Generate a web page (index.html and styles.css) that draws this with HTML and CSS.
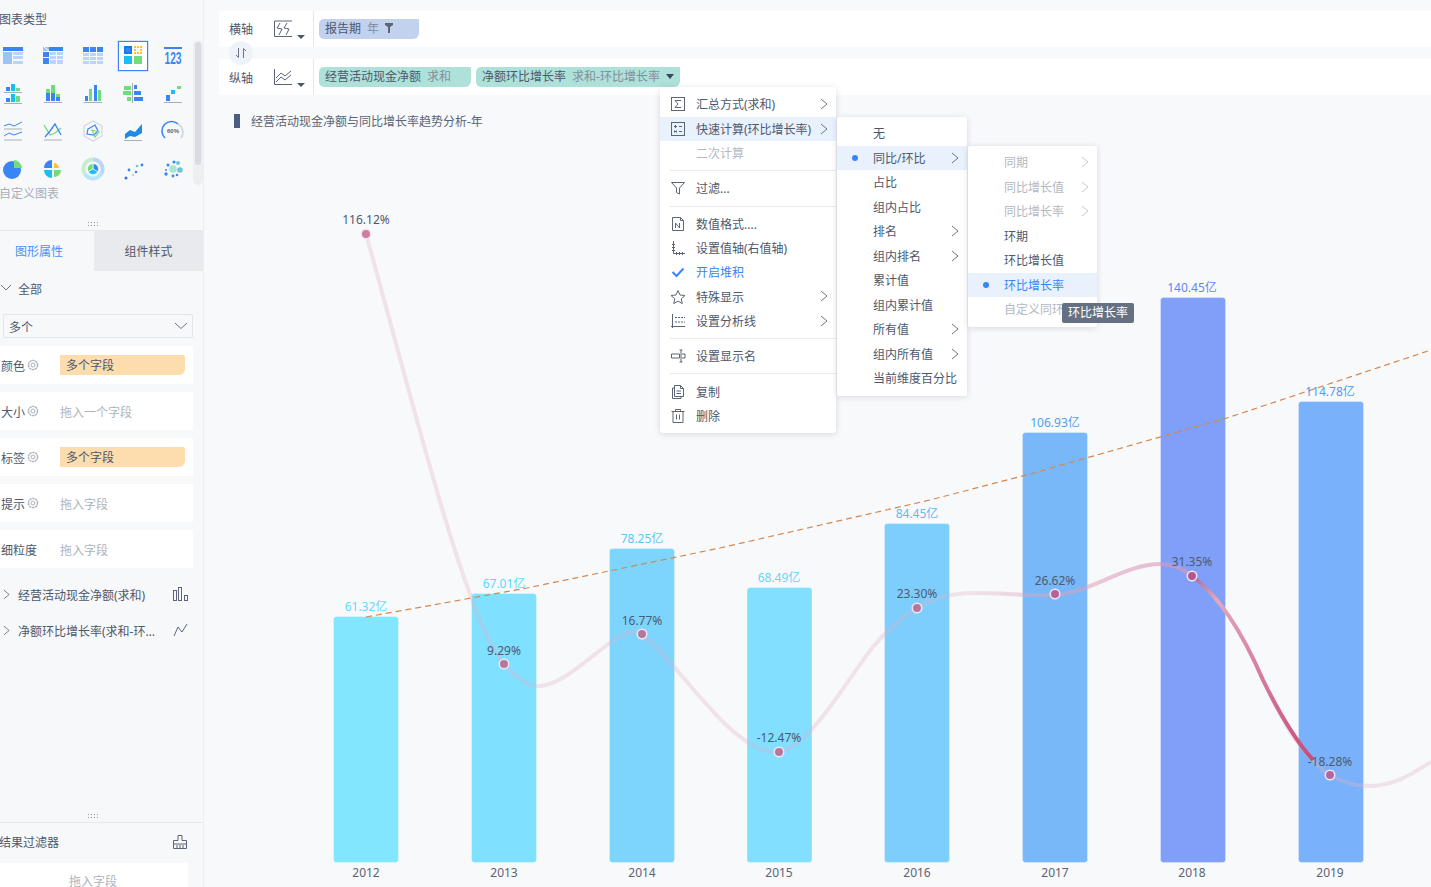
FILE: index.html
```html
<!DOCTYPE html>
<html lang="zh">
<head>
<meta charset="utf-8">
<title>图表</title>
<link rel="stylesheet" href="styles.css">
</head>
<body>
<svg class="defs" aria-hidden="true">
  <symbol id="chev" viewBox="0 0 8 12"><polyline points="1,1 7,6 1,11" fill="none" stroke="currentColor" stroke-width="1"/></symbol>
  <symbol id="gear" viewBox="0 0 12 12"><circle cx="6" cy="6" r="4.6" fill="none" stroke="currentColor" stroke-width="1.4" stroke-dasharray="2.4 .5"/><circle cx="6" cy="6" r="2" fill="none" stroke="currentColor" stroke-width="1"/></symbol>
</svg>
<div class="app">
  <aside class="side">
    <div class="side-title">图表类型</div>
    <div class="types">
      <div class="type-grid">
        <div class="type"><svg width="24" height="24"><rect x="2" y="3" width="20" height="4" fill="#3a85f5"/><rect x="2" y="8" width="9" height="6" fill="#9cc2f6"/><rect x="2" y="14" width="9" height="6" fill="#9cc2f6"/><rect x="12" y="8" width="10" height="3" fill="#bcd4f8"/><rect x="12" y="12" width="10" height="3" fill="#bcd4f8"/><rect x="12" y="17" width="10" height="3" fill="#bcd4f8"/></svg></div>
        <div class="type"><svg width="24" height="24"><rect x="2" y="3" width="6" height="4" fill="#9cc2f6"/><line x1="3" y1="3" x2="8" y2="7" stroke="#fff"/><rect x="8" y="3" width="14" height="4" fill="#3a85f5"/><rect x="2" y="8" width="6" height="5" fill="#3a85f5"/><rect x="2" y="14" width="6" height="6" fill="#3a85f5"/><rect x="9" y="8" width="6" height="3" fill="#bcd4f8"/><rect x="16" y="8" width="6" height="3" fill="#bcd4f8"/><rect x="9" y="12" width="6" height="3" fill="#bcd4f8"/><rect x="16" y="12" width="6" height="3" fill="#bcd4f8"/><rect x="9" y="16" width="6" height="4" fill="#bcd4f8"/><rect x="16" y="16" width="6" height="4" fill="#bcd4f8"/></svg></div>
        <div class="type"><svg width="24" height="24"><rect x="2" y="3" width="6" height="5" fill="#3a85f5"/><rect x="9" y="3" width="6" height="5" fill="#3a85f5"/><rect x="16" y="3" width="6" height="5" fill="#3a85f5"/><rect x="2" y="9" width="6" height="3" fill="#bcd4f8"/><rect x="9" y="9" width="6" height="3" fill="#bcd4f8"/><rect x="16" y="9" width="6" height="3" fill="#bcd4f8"/><rect x="2" y="13" width="6" height="3" fill="#bcd4f8"/><rect x="9" y="13" width="6" height="3" fill="#bcd4f8"/><rect x="16" y="13" width="6" height="3" fill="#bcd4f8"/><rect x="2" y="17" width="6" height="3" fill="#bcd4f8"/><rect x="9" y="17" width="6" height="3" fill="#bcd4f8"/><rect x="16" y="17" width="6" height="3" fill="#bcd4f8"/></svg></div>
        <div class="type"><div class="type-on"><svg width="30" height="30"><rect x="5" y="4" width="8" height="8" fill="#0e7fe8"/><rect x="7" y="6" width="4" height="4" fill="#3a85f5"/><g fill="#fbc02d"><rect x="15" y="4" width="2" height="2"/><rect x="18" y="4" width="2" height="2"/><rect x="21" y="4" width="2" height="2"/><rect x="15" y="7" width="2" height="2"/><rect x="21" y="7" width="2" height="2"/><rect x="15" y="10" width="2" height="2"/><rect x="18" y="10" width="2" height="2"/><rect x="21" y="10" width="2" height="2"/></g><rect x="5" y="14" width="8" height="8" fill="#19bff2"/><rect x="15" y="14" width="8" height="8" fill="#6fdc7d"/></svg></div></div>
        <div class="type"><svg width="24" height="24"><rect x="3" y="3" width="18" height="2" fill="#3a85f5"/><text x="12" y="20" class="t123" textLength="17" lengthAdjust="spacingAndGlyphs">123</text></svg></div>

        <div class="type"><svg width="24" height="24"><rect x="5" y="6" width="4" height="4" fill="#3a85f5"/><rect x="10" y="3" width="4" height="7" fill="#19bff2"/><rect x="15" y="7" width="4" height="3" fill="#6fdc7d"/><rect x="3" y="11" width="18" height="1" fill="#a9aeb9"/><rect x="5" y="17" width="4" height="4" fill="#3a85f5"/><rect x="10" y="13" width="4" height="8" fill="#19bff2"/><rect x="15" y="15" width="4" height="6" fill="#6fdc7d"/><rect x="3" y="22" width="18" height="1" fill="#a9aeb9"/></svg></div>
        <div class="type"><svg width="24" height="24"><rect x="5" y="8" width="4" height="4" fill="#6fdc7d"/><rect x="5" y="12" width="4" height="8" fill="#3a85f5"/><rect x="10" y="4" width="4" height="8" fill="#6fdc7d"/><rect x="10" y="12" width="4" height="8" fill="#3a85f5"/><rect x="15" y="13" width="4" height="3" fill="#6fdc7d"/><rect x="15" y="16" width="4" height="4" fill="#3a85f5"/><rect x="3" y="21" width="18" height="1" fill="#a9aeb9"/></svg></div>
        <div class="type"><svg width="24" height="24"><rect x="4" y="15" width="3" height="5" fill="#3a85f5"/><rect x="8" y="8" width="3" height="12" fill="#6fdc7d"/><rect x="13" y="4" width="3" height="16" fill="#3a85f5"/><rect x="17" y="9" width="3" height="11" fill="#6fdc7d"/><rect x="3" y="21" width="18" height="1" fill="#a9aeb9"/></svg></div>
        <div class="type"><svg width="24" height="24"><rect x="11" y="2" width="1" height="20" fill="#a9aeb9"/><rect x="3" y="5" width="7" height="4" fill="#6fdc7d"/><rect x="2" y="10" width="8" height="4" fill="#6fdc7d"/><rect x="6" y="16" width="4" height="4" fill="#6fdc7d"/><rect x="13" y="4" width="3" height="4" fill="#3a85f5"/><rect x="13" y="10" width="7" height="4" fill="#3a85f5"/><rect x="13" y="16" width="9" height="4" fill="#3a85f5"/></svg></div>
        <div class="type"><svg width="24" height="24"><rect x="5" y="14" width="4" height="6" fill="#3a85f5"/><rect x="10" y="9" width="4" height="4" fill="#19bff2"/><rect x="16" y="5" width="4" height="3" fill="#6fdc7d"/><rect x="3" y="21" width="18" height="1" fill="#a9aeb9"/></svg></div>

        <div class="type"><svg width="24" height="24" fill="none"><polyline points="3,7 8,5 13,7 21,3" stroke="#3a85f5"/><line x1="3" y1="10" x2="21" y2="10" stroke="#a9aeb9"/><polyline points="3,17 8,14 13,16 21,13" stroke="#3a85f5"/><line x1="3" y1="21" x2="21" y2="21" stroke="#a9aeb9"/></svg></div>
        <div class="type"><svg width="24" height="24" fill="none"><polyline points="3,6 9,16 14,14 20,9" stroke="#6fdc7d" stroke-width="1.3"/><polyline points="4,18 9,12 14,5 20,16" stroke="#3a85f5" stroke-width="1.3"/><line x1="3" y1="21" x2="21" y2="21" stroke="#a9aeb9"/></svg></div>
        <div class="type"><svg width="24" height="24" fill="none"><polygon points="12,2 21,7 21,17 12,22 3,17 3,7" stroke="#d4d6dc" stroke-width="1.2"/><polygon points="7,10 14,6 17,12 13,16 6,15" stroke="#3a85f5" stroke-width="1.2"/><polygon points="11,11 18,13 14,18" stroke="#6fdc7d" stroke-width="1.2"/></svg></div>
        <div class="type"><svg width="24" height="24"><path d="M4 15 L9 11 L14 13 L21 5 V14 L14 18 L9 17 L4 20 Z" fill="#1f8be8"/><rect x="3" y="21" width="18" height="1" fill="#a9aeb9"/></svg></div>
        <div class="type"><svg width="24" height="24" fill="none"><path d="M4 19 A9.5 9.5 0 0 1 17 5" stroke="#3a85f5" stroke-width="1.6"/><path d="M17 5 A9.5 9.5 0 0 1 20 19" stroke="#d4d6dc" stroke-width="1.6"/><text x="12" y="14" class="t60">60%</text></svg></div>

        <div class="type"><svg width="24" height="24"><circle cx="11" cy="13" r="9" fill="#3a85f5"/><path d="M13 3 A9 9 0 0 1 21 11 H13 Z" fill="#6fdc7d"/></svg></div>
        <div class="type"><svg width="24" height="24"><path d="M11 3 V11 H3 A8 8 0 0 1 11 3Z" fill="#3a85f5"/><path d="M3 13 H11 V21 A8 8 0 0 1 3 13Z" fill="#19bff2"/><path d="M13 6 A6 6 0 0 1 18 11 H13Z" fill="#fbc02d"/><path d="M13 13 H20 A7 7 0 0 1 13 20Z" fill="#6fdc7d"/></svg></div>
        <div class="type"><svg width="24" height="24" fill="none"><path d="M12 2.500 A9.500 9.500 0 0 1 20.200 16.800" stroke="#bcd4f8" stroke-width="4"/><path d="M20.200 16.800 A9.500 9.500 0 0 1 3.800 16.800" stroke="#b6e6f8" stroke-width="4"/><path d="M3.800 16.800 A9.500 9.500 0 0 1 12 2.500" stroke="#c8ecd0" stroke-width="4"/><path d="M12 12 V6.500 A5.500 5.500 0 0 1 16.800 14.800Z" fill="#3a85f5" stroke="#fff" stroke-width=".6"/><path d="M12 12 L7.200 14.800 A5.500 5.500 0 0 1 12 6.500Z" fill="#6fdc7d" stroke="#fff" stroke-width=".6"/><path d="M12 12 L16.800 14.800 A5.500 5.500 0 0 1 7.200 14.800Z" fill="#19bff2" stroke="#fff" stroke-width=".6"/></svg></div>
        <div class="type"><svg width="24" height="24"><circle cx="5" cy="21" r="1.5" fill="#3a6fd0"/><circle cx="8" cy="13" r="1.4" fill="#3a85f5"/><circle cx="12" cy="18" r="1.3" fill="#a8e6d0"/><circle cx="15" cy="15" r="1.3" fill="#3a85f5"/><circle cx="16" cy="9" r="1.3" fill="#6cc6d8"/><circle cx="21" cy="8" r="1.4" fill="#3a85f5"/></svg></div>
        <div class="type"><svg width="24" height="24"><circle cx="7" cy="8" r="1.5" fill="#3a85f5"/><circle cx="13" cy="5" r="1.6" fill="#3a85f5"/><circle cx="17" cy="6" r="2" fill="#6cc6d8"/><circle cx="5" cy="13" r="1" fill="#3a85f5"/><circle cx="12" cy="12" r="3.8" fill="#a8e6d0"/><circle cx="19" cy="13" r="2.8" fill="#6cc6d8"/><circle cx="5" cy="17" r="1.7" fill="#3a85f5"/><circle cx="12" cy="19" r="1.4" fill="#3a85f5"/><circle cx="16" cy="18" r="1.3" fill="#3a85f5"/></svg></div>
      </div>
      <div class="track"><div class="thumb"></div></div>
    </div>
    <div class="custom">自定义图表</div>
    <div class="grip-row"><div class="grip"></div></div>
    <div class="tabs"><div class="tab tab-on">图形属性</div><div class="tab tab-off">组件样式</div></div>
    <div class="all-row"><svg class="chev-down" width="12" height="8" viewBox="0 0 12 8"><polyline points="1,1 6,6 11,1" fill="none" stroke="#6b7485"/></svg><span class="nudge">全部</span></div>
    <div class="select"><span class="nudge">多个</span><svg width="14" height="8" viewBox="0 0 14 8"><polyline points="1,1 7,6.500 13,1" fill="none" stroke="#6b7485"/></svg></div>
    <div class="field"><div class="field-label"><span class="nudge">颜色</span><svg class="gear"><use href="#gear"/></svg></div><div class="tag-orange">多个字段</div></div>
    <div class="field"><div class="field-label"><span class="nudge">大小</span><svg class="gear"><use href="#gear"/></svg></div><div class="hint nudge">拖入一个字段</div></div>
    <div class="field"><div class="field-label"><span class="nudge">标签</span><svg class="gear"><use href="#gear"/></svg></div><div class="tag-orange">多个字段</div></div>
    <div class="field"><div class="field-label"><span class="nudge">提示</span><svg class="gear"><use href="#gear"/></svg></div><div class="hint nudge">拖入字段</div></div>
    <div class="field"><div class="field-label"><span class="nudge">细粒度</span></div><div class="hint nudge">拖入字段</div></div>
    <div class="tree first">
      <svg class="tree-chev"><use href="#chev"/></svg><span class="tree-text nudge">经营活动现金净额(求和)</span>
      <svg class="tree-ic" width="15" height="14" viewBox="0 0 15 14" fill="none" stroke="#5b6577"><rect x=".5" y="3.500" width="3" height="10"/><rect x="5.500" y=".5" width="3" height="13"/><rect x="11.500" y="8.500" width="3" height="5"/></svg>
    </div>
    <div class="tree">
      <svg class="tree-chev"><use href="#chev"/></svg><span class="tree-text nudge">净额环比增长率(求和-环…</span>
      <svg class="tree-ic" width="15" height="14" viewBox="0 0 15 14" fill="none" stroke="#5b6577"><polyline points="1,13 5,4 9,9 14,1"/></svg>
    </div>
    <div class="bottom">
      <div class="grip-row small"><div class="grip"></div></div>
      <div class="filter-head"><span>结果过滤器</span><svg width="16" height="16" viewBox="0 0 16 16" fill="none" stroke="#5b6577"><path d="M6 1.500 H10 V6.500 H14.500 V14.500 H1.500 V6.500 H6 Z"/><path d="M1.500 10 H14.500 M5 11 V14 M8 11 V14 M11 11 V14"/></svg></div>
      <div class="filter-box">拖入字段</div>
    </div>
  </aside>

  <main class="main">
    <div class="axis">
      <div class="axis-head">
        <span class="axis-label">横轴</span>
        <svg class="axis-ic" width="20" height="18" viewBox="0 0 20 18" fill="none" stroke="#5b6577"><path d="M1.500 1 V16.500 H19 M1.500 1 H19"/><path d="M7 3 L4 8 L9 9 L6 15 M14 3 L11 8 L16 9 L13 15"/></svg>
        <span class="caret"></span>
      </div>
      <div class="pills">
        <div class="pill pill-blue"><span>报告期</span><span class="sub">年</span><svg class="funnel" width="8" height="10" viewBox="0 0 8 10"><path d="M0 0 H8 V2 L5 4 V10 H3 V4 L0 2Z" fill="#5b6577"/></svg></div>
      </div>
    </div>
    <div class="swap"><svg width="12" height="12" viewBox="0 0 12 12" fill="none" stroke="#6b7485"><path d="M3.500 1 V10.500 M1 8 L3.500 10.500 M8.500 11 V1.500 M8.500 1.500 L11 4"/></svg></div>
    <div class="axis">
      <div class="axis-head">
        <span class="axis-label axis-low">纵轴</span>
        <svg class="axis-ic" width="20" height="18" viewBox="0 0 20 18" fill="none" stroke="#5b6577"><path d="M1.500 1 V16.500 H19"/><path d="M3 10 L8 5 L12 8 L18 3 M3 14 L8 9 L12 12 L18 7"/></svg>
        <span class="caret"></span>
      </div>
      <div class="pills">
        <div class="pill pill-green pad-a"><span>经营活动现金净额</span><span class="sub">求和</span></div>
        <div class="pill pill-green"><span>净额环比增长率</span><span class="sub">求和-环比增长率</span><span class="pill-caret"></span></div>
      </div>
    </div>
    <div class="chart-title"><span class="mark"></span><span>经营活动现金净额与同比增长率趋势分析-年</span></div>

    <svg class="chart" width="1227" height="757" viewBox="204 130 1227 757">
      <defs>
        <linearGradient id="hot" gradientUnits="userSpaceOnUse" x1="1192" y1="576" x2="1313" y2="760">
          <stop offset="0" stop-color="#a06aa8"/><stop offset=".15" stop-color="#e2a8bc"/><stop offset=".5" stop-color="#d880a0"/><stop offset="1" stop-color="#c84c78"/>
        </linearGradient>
        <linearGradient id="mid" gradientUnits="userSpaceOnUse" x1="960" y1="0" x2="1140" y2="0">
          <stop offset="0" stop-color="#d88fb4" stop-opacity="0"/><stop offset="1" stop-color="#d88fb4" stop-opacity=".42"/>
        </linearGradient>
      </defs>
      <g stroke="#fff" stroke-opacity=".3">
        <rect x="333.500" y="616.500" width="65" height="246" rx="3" fill="#82e6ff"/>
        <rect x="471.500" y="593.500" width="65" height="269" rx="3" fill="#80e0ff"/>
        <rect x="609.500" y="548.500" width="65" height="314" rx="3" fill="#7dd5fd"/>
        <rect x="747" y="587.500" width="65" height="275" rx="3" fill="#82dfff"/>
        <rect x="884.500" y="523.500" width="65" height="339" rx="3" fill="#7dcefc"/>
        <rect x="1022.500" y="432.500" width="65" height="430" rx="3" fill="#78b8f8"/>
        <rect x="1160.500" y="297.500" width="65" height="565" rx="3" fill="#7f9ff9"/>
        <rect x="1298.500" y="401.500" width="65" height="461" rx="3" fill="#79b1fa"/>
      </g>
      <path class="line-base" d="M366 234 C410 390 465 620 504 664 C520 682 530 686 538 686 C570 686 610 632 634 632 C660 632 725 752 775 752 C815 752 860 650 890 630 C900 620 908 612 917 608 C935 596 955 593 975 593 C1000 593 1030 596 1055 595 C1090 593 1125 564 1160 564 C1175 564 1185 570 1192 576 C1225 600 1250 650 1263 680 C1280 715 1295 745 1313 760 C1320 768 1325 773 1330 775 C1345 783 1355 786 1370 786 C1395 786 1415 772 1431 762"/>
      <path class="line-mid" d="M975 593 C1000 593 1030 596 1055 595 C1090 593 1125 564 1160 564 C1175 564 1185 570 1192 576"/>
      <path class="line-hot" d="M1192 576 C1225 600 1250 650 1263 680 C1280 715 1295 740 1313 760"/>
      <path class="dash" d="M366 617 L527 588 L720 548 L930 500 L1030 474 L1227 418 L1431 350"/>
      <g class="dots">
        <circle cx="366" cy="234" r="4.750" fill="#cf7c9e"/>
        <circle cx="504" cy="664" r="4.750" fill="#b5779f"/>
        <circle cx="642" cy="634" r="4.750" fill="#b5779f"/>
        <circle cx="779" cy="752" r="4.750" fill="#b5779f"/>
        <circle cx="917" cy="608" r="4.750" fill="#b5779f"/>
        <circle cx="1055" cy="594" r="4.750" fill="#b5619a"/>
        <circle cx="1192" cy="576" r="4.750" fill="#b8558e"/>
        <circle cx="1330" cy="775" r="4.750" fill="#b5669f"/>
      </g>
      <g class="vals">
        <text x="366" y="611" fill="#5fdcfb">61.32亿</text>
        <text x="504" y="588" fill="#5cd8fb">67.01亿</text>
        <text x="642" y="543" fill="#58c8fb">78.25亿</text>
        <text x="779" y="582" fill="#62d6fb">68.49亿</text>
        <text x="917" y="518" fill="#5abcf8">84.45亿</text>
        <text x="1055" y="427" fill="#4fa0f3">106.93亿</text>
        <text x="1192" y="292" fill="#5f85f1">140.45亿</text>
        <text x="1330" y="396" fill="#4f9bf5">114.78亿</text>
      </g>
      <g class="rates">
        <text x="366" y="224">116.12%</text>
        <text x="504" y="655">9.29%</text>
        <text x="642" y="625">16.77%</text>
        <text x="779" y="742">-12.47%</text>
        <text x="917" y="598">23.30%</text>
        <text x="1055" y="585">26.62%</text>
        <text x="1192" y="566">31.35%</text>
        <text x="1330" y="766">-18.28%</text>
      </g>
      <g class="years">
        <text x="366" y="877">2012</text><text x="504" y="877">2013</text><text x="642" y="877">2014</text><text x="779" y="877">2015</text><text x="917" y="877">2016</text><text x="1055" y="877">2017</text><text x="1192" y="877">2018</text><text x="1330" y="877">2019</text>
      </g>
    </svg>

    <div class="menu menu-1">
      <div class="mi"><svg class="mi-ic" width="16" height="16" viewBox="0 0 16 16"><rect x="1.500" y="1.500" width="13" height="13"/><path d="M11 4.500 H5 L8 8 L5 11.500 H11"/></svg><span>汇总方式(求和)</span><svg class="arrow"><use href="#chev"/></svg></div>
      <div class="mi active"><svg class="mi-ic" width="16" height="16" viewBox="0 0 16 16"><rect x="1.500" y="1.500" width="13" height="13"/><path d="M4 5.500 H7 M9 5.500 H12 M4 10.500 H7 M9 10.500 H12 M5.500 4 V7 M4.500 9.500 L6.500 11.500 M6.500 9.500 L4.500 11.500"/></svg><span>快速计算(环比增长率)</span><svg class="arrow"><use href="#chev"/></svg></div>
      <div class="mi disabled"><span class="noicon">二次计算</span></div>
      <div class="sep"></div>
      <div class="mi"><svg class="mi-ic" width="16" height="16" viewBox="0 0 16 16"><path d="M1.500 2.500 H14.500 L9.500 8 V14 L6.500 12.500 V8 Z"/></svg><span>过滤...</span></div>
      <div class="sep"></div>
      <div class="mi"><svg class="mi-ic" width="16" height="16" viewBox="0 0 16 16"><path d="M2.500 1.500 H10.500 L13.500 4.500 V14.500 H2.500 Z M10.500 1.500 V4.500 H13.500"/><path d="M5.500 12 V7 L9.500 12 V7"/></svg><span>数值格式....</span></div>
      <div class="mi"><svg class="mi-ic" width="16" height="16" viewBox="0 0 16 16"><path d="M3.500 1 V13.500 H15 M2 4.500 H5 M2 7.500 H5 M2 10.500 H5 M6.500 12 V15 M9.500 12 V15 M12.500 12 V15"/></svg><span>设置值轴(右值轴)</span></div>
      <div class="mi blue"><svg class="mi-check" width="16" height="16" viewBox="0 0 16 16"><path d="M2.500 8 L6.500 12 L13.500 4.500" fill="none" stroke="#3a85f5" stroke-width="2"/></svg><span>开启堆积</span></div>
      <div class="mi"><svg class="mi-ic" width="16" height="16" viewBox="0 0 16 16"><path d="M8 1.500 L10 6 L15 6.500 L11.300 9.800 L12.300 14.600 L8 12.100 L3.700 14.600 L4.700 9.800 L1 6.500 L6 6 Z"/></svg><span>特殊显示</span><svg class="arrow"><use href="#chev"/></svg></div>
      <div class="mi"><svg class="mi-ic" width="16" height="16" viewBox="0 0 16 16"><path d="M5 4.500 H15 M5 9 H15" stroke-dasharray="2 1"/><path d="M2.500 1 V15 M1 13.500 H15"/></svg><span>设置分析线</span><svg class="arrow"><use href="#chev"/></svg></div>
      <div class="sep"></div>
      <div class="mi"><svg class="mi-ic" width="16" height="16" viewBox="0 0 16 16"><path d="M1.500 6 H9.500 V10 H1.500 Z M11 2 V14 M9.500 2 H12.500 M9.500 14 H12.500 M12 6 H15 V10 H12"/></svg><span>设置显示名</span></div>
      <div class="sep"></div>
      <div class="mi"><svg class="mi-ic" width="16" height="16" viewBox="0 0 16 16"><path d="M4.500 1.500 H10.500 L13.500 4.500 V12.500 H4.500 Z M10.500 1.500 V4.500 H13.500 M6.500 7 H11 M6.500 9.500 H11"/><path d="M4.500 4 H2.500 V14.500 H11 V12.500"/></svg><span>复制</span></div>
      <div class="mi"><svg class="mi-ic" width="16" height="16" viewBox="0 0 16 16"><path d="M1.500 3.500 H14.500 M5.500 3.500 V1.500 H10.500 V3.500 M3 3.500 V14.500 H13 V3.500 M6.500 6.500 V11.500 M9.500 6.500 V11.500"/></svg><span>删除</span></div>
    </div>

    <div class="menu menu-2">
      <div class="si">无</div>
      <div class="si active"><i class="dot"></i>同比/环比<svg class="arrow"><use href="#chev"/></svg></div>
      <div class="si">占比</div>
      <div class="si">组内占比</div>
      <div class="si">排名<svg class="arrow"><use href="#chev"/></svg></div>
      <div class="si">组内排名<svg class="arrow"><use href="#chev"/></svg></div>
      <div class="si">累计值</div>
      <div class="si">组内累计值</div>
      <div class="si">所有值<svg class="arrow"><use href="#chev"/></svg></div>
      <div class="si">组内所有值<svg class="arrow"><use href="#chev"/></svg></div>
      <div class="si">当前维度百分比</div>
    </div>

    <div class="menu menu-3">
      <div class="si disabled">同期<svg class="arrow"><use href="#chev"/></svg></div>
      <div class="si disabled">同比增长值<svg class="arrow"><use href="#chev"/></svg></div>
      <div class="si disabled">同比增长率<svg class="arrow"><use href="#chev"/></svg></div>
      <div class="si">环期</div>
      <div class="si">环比增长值</div>
      <div class="si active blue"><i class="dot"></i>环比增长率</div>
      <div class="si disabled">自定义同环比</div>
    </div>
    <div class="tooltip">环比增长率</div>
  </main>
</div>
</body>
</html>
```

FILE: styles.css
```css
* { box-sizing: border-box; }
html, body { margin: 0; padding: 0; }
body {
  width: 1431px;
  height: 887px;
  overflow: hidden;
  font-family: "Noto Sans", "Noto Sans CJK SC", sans-serif;
  font-size: 12px;
  color: #4d586c;
  background: #f8f9fb;
}
.defs { display: none; }
.app { display: flex; height: 887px; }
.nudge { padding-top: 1px; }

/* sidebar */
.side {
  width: 204px;
  flex: none;
  height: 887px;
  overflow: hidden;
  display: flex;
  flex-direction: column;
  background: #f7f8fa;
  border-right: 1px solid #eceef2;
}
.side-title { height: 37px; line-height: 39px; margin-left: -1px; white-space: nowrap; }
.types { display: flex; flex: none; height: 151px; margin-left: -7px; }
.type-grid {
  width: 200px;
  display: grid;
  grid-template-columns: repeat(5, 40px);
  grid-auto-rows: 37.67px;
}
.type { display: flex; align-items: center; justify-content: center; }
.type svg { display: block; }
.type-on {
  width: 32px;
  height: 32px;
  padding: 1px;
  background: #d5e3f8;
}
.type-on svg { border: 1px solid #3a85f5; background: #fff; }
.t123 {
  font-family: "Liberation Sans", sans-serif;
  font-size: 17px;
  font-weight: 700;
  fill: #3a85f5;
  text-anchor: middle;
}
.t60 {
  font-family: "Liberation Sans", sans-serif;
  font-size: 6px;
  font-weight: 700;
  fill: #5b6577;
  text-anchor: middle;
}
.track {
  width: 10px;
  height: 145px;
  margin-top: 3px;
  border-radius: 5px;
  background: #eeeff3;
  padding: 2px;
}
.thumb { width: 6px; height: 123px; border-radius: 3px; background: #d9dbe0; }
.custom { flex: none; color: #a9aeb9; line-height: 12px; margin-left: -1px; white-space: nowrap; height: 12px; }
.grip-row { flex: none; width: 186px; height: 12px; margin-top: 18px; display: flex; justify-content: center; align-items: center; }
.grip-row.small { margin-top: 0; height: 12px; }
.grip {
  width: 12px;
  height: 6px;
  background-image: radial-gradient(circle, #8d94a1 .7px, transparent 1px);
  background-size: 3px 3px;
}
.tabs { display: flex; height: 41px; border-top: 1px solid #e6e8ec; flex: none; }
.tab { line-height: 42px; height: 40px; text-align: center; }
.tab-on { width: 94px; padding-right: 16px; color: #4a90f5; }
.tab-off { flex: 1; background: #e8eaee; }
.all-row { display: flex; align-items: center; height: 34px; flex: none; }
.chev-down { margin-right: 6px; }
.select {
  flex: none;
  width: 190px;
  height: 24px;
  margin: 9px 0 0 3px;
  padding: 0 4px 0 5px;
  display: flex;
  align-items: center;
  justify-content: space-between;
  border: 1px solid #e3e5ea;
  border-radius: 2px;
}
.field {
  flex: none;
  width: 193px;
  height: 38px;
  margin-top: 8px;
  display: flex;
  align-items: center;
  background: #fff;
}
.field-label { width: 60px; padding-left: 1px; display: flex; align-items: center; white-space: nowrap; }
.gear { width: 12px; height: 12px; margin-left: 2px; color: #aeb3bd; }
.tag-orange {
  width: 125px;
  height: 20px;
  line-height: 22px;
  padding-left: 6px;
  background: #fddcae;
  border-radius: 0 2px 6px 0;
}
.hint { color: #aeb3bd; }
.tree { flex: none; height: 36px; display: flex; align-items: center; padding-left: 3px; }
.tree.first { margin-top: 8px; }
.tree-chev { width: 7px; height: 11px; color: #6b7485; flex: none; }
.tree-text { margin-left: 8px; width: 155px; white-space: nowrap; overflow: hidden; }
.tree-ic { flex: none; }
.bottom { margin-top: auto; flex: none; height: 77px; }
.filter-head {
  height: 39px;
  border-top: 1px solid #e6e8ec;
  display: flex;
  align-items: center;
  justify-content: space-between;
  margin-left: -1px;
  padding-right: 15px;
}
.filter-box {
  width: 188px;
  height: 24px;
  margin-top: 2px;
  padding: 11px 2px 0 0;
  line-height: 16px;
  text-align: center;
  color: #aeb3bd;
  background: #fff;
  overflow: hidden;
}

/* main */
.main { position: relative; flex: 1; padding: 11px 0 0 15px; min-width: 0; }
.axis { display: flex; height: 36px; background: #fff; }
.axis-head {
  position: relative;
  width: 95px;
  flex: none;
  display: flex;
  align-items: center;
  padding-left: 10px;
  border-right: 1px solid #e5e7eb;
}
.axis-label { width: 24px; }
.axis-low { padding-top: 1px; }
.axis-ic { margin-left: 20px; }
.caret {
  width: 0;
  height: 0;
  margin: 15px 0 0 4px;
  border: 4px solid transparent;
  border-top-color: #4a5568;
  border-bottom-width: 0;
}
.pills { display: flex; gap: 5px; align-items: flex-start; padding: 8px 0 0 5px; }
.pill {
  height: 20px;
  display: flex;
  align-items: center;
  padding: 0 6px 2px;
  border-radius: 5px 1px 6px 5px;
  white-space: nowrap;
}
.pill .sub { margin-left: 6px; color: #858d9b; }
.pill-blue { background: #c2d1ee; padding-right: 26px; }
.pill-green { background: #aee1da; }
.pad-a { padding-right: 20px; }
.funnel { margin-left: 6px; }
.pill-caret {
  margin-left: 6px;
  width: 0;
  height: 0;
  border: 4.500px solid transparent;
  border-top: 5px solid #3c4658;
  border-bottom-width: 0;
}
.swap {
  position: relative;
  z-index: 2;
  width: 24px;
  height: 24px;
  margin: -6px 0 -6px 10px;
  border-radius: 50%;
  background: #eef2f9;
  display: flex;
  align-items: center;
  justify-content: center;
}
.chart-title { display: flex; align-items: center; height: 18px; margin: 17px 0 0 15px; color: #5a6474; }
.mark { width: 6px; height: 14px; background: #4a5d85; margin-right: 11px; }
.chart { display: block; margin-left: -15px; }
.line-base { fill: none; stroke: #e0b0c8; stroke-opacity: .32; stroke-width: 4; }
.line-mid { fill: none; stroke: url(#mid); stroke-width: 4; }
.line-hot { fill: none; stroke: url(#hot); stroke-width: 4; }
.dash { fill: none; stroke: #d4884f; stroke-width: 1.200; stroke-dasharray: 6 4; }
.dots circle { stroke: #f0e6ef; stroke-width: 1.500; }
.vals text, .rates text, .years text { font-size: 12px; text-anchor: middle; }
.rates text { fill: #4d5a70; }
.years text { fill: #5a6474; }

/* menus */
.menu {
  position: absolute;
  background: #fff;
  border-radius: 2px;
  box-shadow: 0 1px 6px rgba(60, 70, 90, .18);
  z-index: 5;
}
.menu-1 { left: 456px; top: 87px; width: 176px; padding: 5.200px 0 4.800px; }
.mi {
  height: 24.330px;
  display: flex;
  align-items: center;
  padding-left: 10px;
  white-space: nowrap;
  position: relative;
}
.mi > span { margin-left: 10px; }
.mi > span.noicon { margin-left: 26px; }
.mi-ic { fill: none; stroke: #5b6577; stroke-width: 1; flex: none; }
.mi-check { flex: none; }
.active { background: #e9f1fd; }
.disabled { color: #b3b8c2; }
.blue { color: #3a85f5; }
.sep { height: 1px; margin: 5px 0 5px 10px; background: #e8eaee; }
.arrow { position: absolute; right: 8px; top: 6px; width: 8px; height: 12px; color: #6b7485; }
.menu-2 { left: 633px; top: 117px; width: 130px; padding: 4px 0 5.500px; }
.menu-3 { left: 764px; top: 146px; width: 129px; padding: 4.300px 0 5.200px; }
.si {
  position: relative;
  height: 24.500px;
  line-height: 26.500px;
  padding-left: 36px;
  white-space: nowrap;
}
.dot {
  position: absolute;
  left: 15px;
  top: 9.500px;
  width: 6px;
  height: 6px;
  border-radius: 50%;
  background: #3a85f5;
}
.si.disabled .arrow { color: #c4c8d0; }
.tooltip {
  position: absolute;
  z-index: 6;
  left: 858px;
  top: 303px;
  width: 72px;
  height: 20px;
  line-height: 20px;
  text-align: center;
  color: #fff;
  background: #657183;
  border-radius: 2px;
}
```
